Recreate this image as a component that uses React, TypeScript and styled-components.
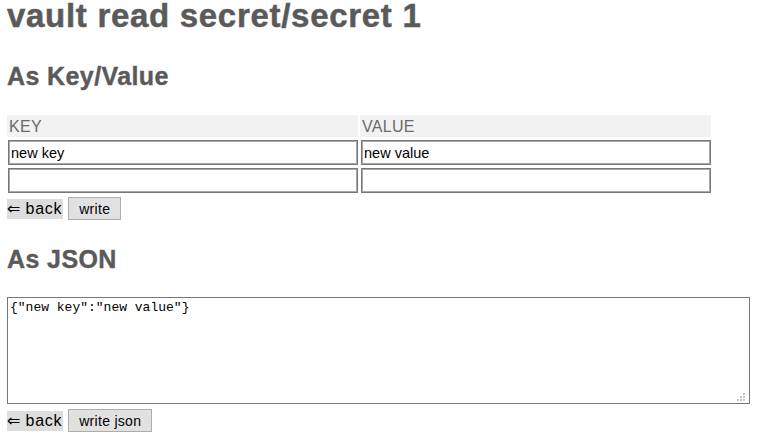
import React from "react";
import styled, { createGlobalStyle } from "styled-components";

const Global = createGlobalStyle`
  html, body { margin: 0; padding: 0; background: #ffffff; }
  body { font-family: "Liberation Sans", Arial, sans-serif; color: #000; }
`;

const Page = styled.div`
  display: flex;
  flex-direction: column;
  align-items: flex-start;
  padding: 0 7px;
`;

const Title = styled.h1`
  margin: 0;
  font-size: 33px;
  line-height: 32px;
  font-weight: bold;
  letter-spacing: 0.7px;
  color: #5a5a5a;
  -webkit-text-stroke: 0.5px #5a5a5a;
`;

const Heading = styled.h2<{ $gap: number }>`
  margin: ${(p) => p.$gap}px 0 0;
  font-size: 25px;
  line-height: 28px;
  font-weight: bold;
  letter-spacing: 0.4px;
  color: #5a5a5a;
  -webkit-text-stroke: 0.4px #5a5a5a;
`;

const KVGrid = styled.div`
  margin-top: 25px;
  display: grid;
  grid-template-columns: 351px 351px;
  column-gap: 2px;
  row-gap: 3px;
`;

const HeadCell = styled.div`
  height: 22px;
  background: #f2f2f2;
  color: #6a6a6a;
  font-size: 16px;
  line-height: 19px;
  letter-spacing: 0.3px;
  padding: 2px 2px 1px;
  box-sizing: border-box;
  text-transform: uppercase;
`;

const Field = styled.input`
  box-sizing: border-box;
  width: calc(100% - 1px);
  margin: 0 0 0 1px;
  height: 25px;
  padding: 1px 2px;
  border: 1px solid #777777;
  box-shadow: inset 0 0 0 1px #a8a8a8;
  font-family: "Liberation Sans", Arial, sans-serif;
  font-size: 14.5px;
  color: #000;
  background: #fff;
  outline: none;
`;

const ButtonRow = styled.div<{ $gap: number }>`
  margin-top: ${(p) => p.$gap}px;
  display: flex;
  align-items: center;
  gap: 5px;
  height: 23px;
`;

const BackLink = styled.span`
  display: inline-block;
  background: #dddddd;
  font-size: 16px;
  line-height: 18px;
  letter-spacing: 0.7px;
  padding: 1px 1px 1px 0;
  color: #000;
  cursor: pointer;
`;

const Arrow = styled.span`
  font-family: "DejaVu Sans", sans-serif;
  letter-spacing: 0;
`;

const Button = styled.button`
  box-sizing: border-box;
  height: 23px;
  padding: 0 10px;
  border: 1px solid #adadad;
  background: #e1e1e1;
  font-family: "Liberation Sans", Arial, sans-serif;
  font-size: 14px;
  letter-spacing: 0.3px;
  color: #000;
  border-radius: 0;
`;

const JsonBox = styled.div`
  position: relative;
  margin-top: 24px;
  width: 743px;
  height: 107px;

  &::after {
    content: "";
    position: absolute;
    right: 5px;
    bottom: 3px;
    width: 2px;
    height: 2px;
    background: #c4c4c4;
    box-shadow: 0 -3px 0 #c4c4c4, 0 -6px 0 #c4c4c4, -3px 0 0 #c4c4c4,
      -3px -3px 0 #c4c4c4, -6px 0 0 #c4c4c4;
    pointer-events: none;
  }
`;

const JsonArea = styled.textarea`
  box-sizing: border-box;
  width: 100%;
  height: 100%;
  margin: 0;
  display: block;
  padding: 2px;
  border: 1px solid #777777;
  font-family: "Liberation Mono", "Courier New", monospace;
  font-size: 13px;
  color: #000;
  resize: none;
  outline: none;
`;

const rows = [
  { key: "new key", value: "new value" },
  { key: "", value: "" },
];

export default function App() {
  return (
    <>
      <Global />
      <Page>
        <Title>vault read secret/secret 1</Title>
        <Heading $gap={30}>As Key/Value</Heading>
        <KVGrid>
          <HeadCell>Key</HeadCell>
          <HeadCell>Value</HeadCell>
          {rows.map((r, i) => (
            <React.Fragment key={i}>
              <Field defaultValue={r.key} />
              <Field defaultValue={r.value} />
            </React.Fragment>
          ))}
        </KVGrid>
        <ButtonRow $gap={4}>
          <BackLink>
            <Arrow>⇐</Arrow> back
          </BackLink>
          <Button>write</Button>
        </ButtonRow>
        <Heading $gap={25}>As JSON</Heading>
        <JsonBox>
          <JsonArea defaultValue={'{"new key":"new value"}'} />
        </JsonBox>
        <ButtonRow $gap={5}>
          <BackLink>
            <Arrow>⇐</Arrow> back
          </BackLink>
          <Button>write json</Button>
        </ButtonRow>
      </Page>
    </>
  );
}
